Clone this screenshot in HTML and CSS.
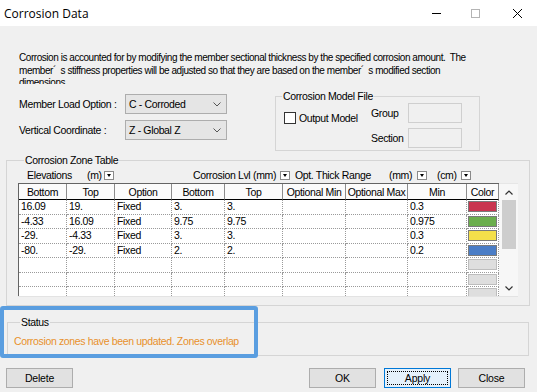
FILE: index.html
```html
<!DOCTYPE html>
<html lang="en">
<head>
    <meta charset="UTF-8">
    <title>Corrosion Data</title>
    <link rel="stylesheet" href="styles.css">
</head>
<body>
    <div class="window">
        <div class="titlebar">
            <span class="title">Corrosion Data</span>
            <div class="controls">
                <svg class="ctl-min" width="9" height="9" viewBox="0 0 9 9"><path d="M0 4.5h9" stroke="#000" stroke-width="1"/></svg>
                <svg class="ctl-max" width="9" height="9" viewBox="0 0 9 9"><rect x="0.5" y="0.5" width="8" height="8" fill="none" stroke="#b4b4b4"/></svg>
                <svg class="ctl-close" width="9" height="9" viewBox="0 0 9 9"><path d="M0 0L9 9M9 0L0 9" stroke="#000" stroke-width="1"/></svg>
            </div>
        </div>

        <div class="content">
            <p class="desc">
                Corrosion is accounted for by modifying the member sectional thickness by the specified corrosion amount.&nbsp; The<br>
                member´&nbsp; s stiffness properties will be adjusted so that they are based on the member´&nbsp; s modified section<br>
                dimensions.
            </p>

            <div class="top">
                <div class="options">
                    <div class="field">
                        <label>Member Load Option :</label>
                        <div class="combo"><span>C - Corroded</span><svg width="8" height="5" viewBox="0 0 8 5"><path d="M0.5 0.5L4 4L7.5 0.5" fill="none" stroke="#555"/></svg></div>
                    </div>
                    <div class="field">
                        <label>Vertical Coordinate :</label>
                        <div class="combo"><span>Z - Global Z</span><svg width="8" height="5" viewBox="0 0 8 5"><path d="M0.5 0.5L4 4L7.5 0.5" fill="none" stroke="#555"/></svg></div>
                    </div>
                </div>

                <fieldset class="group model">
                    <legend>Corrosion Model File</legend>
                    <div class="model-body">
                        <div class="output">
                            <span class="checkbox"></span>
                            <span>Output Model</span>
                        </div>
                        <div class="model-fields">
                            <span>Group</span>
                            <span class="textbox"></span>
                            <span>Section</span>
                            <span class="textbox"></span>
                        </div>
                    </div>
                </fieldset>
            </div>

            <fieldset class="group zone">
                <legend>Corrosion Zone Table</legend>
                <div class="units">
                    <span class="u-elev">Elevations</span>
                    <span class="u-m">(m)</span>
                    <span class="drop gap-79"></span>
                    <span class="u-lvl">Corrosion Lvl</span>
                    <span class="u-mm">(mm)</span>
                    <span class="drop gap-5"></span>
                    <span class="u-range">Opt. Thick Range</span>
                    <span class="u-mm2">(mm)</span>
                    <span class="drop gap-10"></span>
                    <span class="u-cm">(cm)</span>
                    <span class="drop"></span>
                </div>

                <div class="grid-wrap">
                    <table class="grid">
                        <thead>
                            <tr>
                                <th class="c1">Bottom</th>
                                <th class="c2">Top</th>
                                <th class="c3">Option</th>
                                <th class="c4">Bottom</th>
                                <th class="c5">Top</th>
                                <th class="c6">Optional Min</th>
                                <th class="c7">Optional Max</th>
                                <th class="c8">Min</th>
                                <th class="c9">Color</th>
                            </tr>
                        </thead>
                        <tbody>
                            <tr><td>16.09</td><td>19.</td><td>Fixed</td><td>3.</td><td>3.</td><td></td><td></td><td>0.3</td><td><div class="swatch red"></div></td></tr>
                            <tr><td>-4.33</td><td>16.09</td><td>Fixed</td><td>9.75</td><td>9.75</td><td></td><td></td><td>0.975</td><td><div class="swatch green"></div></td></tr>
                            <tr><td>-29.</td><td>-4.33</td><td>Fixed</td><td>3.</td><td>3.</td><td></td><td></td><td>0.3</td><td><div class="swatch yellow"></div></td></tr>
                            <tr><td>-80.</td><td>-29.</td><td>Fixed</td><td>2.</td><td>2.</td><td></td><td></td><td>0.2</td><td><div class="swatch blue"></div></td></tr>
                            <tr><td></td><td></td><td></td><td></td><td></td><td></td><td></td><td></td><td><div class="swatch empty"></div></td></tr>
                            <tr><td></td><td></td><td></td><td></td><td></td><td></td><td></td><td></td><td><div class="swatch empty"></div></td></tr>
                            <tr><td></td><td></td><td></td><td></td><td></td><td></td><td></td><td></td><td><div class="swatch empty"></div></td></tr>
                        </tbody>
                    </table>
                    <div class="vscroll">
                        <div class="arrow"><svg width="8" height="5" viewBox="0 0 8 5"><path d="M0.5 4.5L4 1L7.5 4.5" fill="none" stroke="#333" stroke-width="1.2"/></svg></div>
                        <div class="thumb"></div>
                        <div class="track"></div>
                        <div class="arrow"><svg width="8" height="5" viewBox="0 0 8 5"><path d="M0.5 0.5L4 4L7.5 0.5" fill="none" stroke="#333" stroke-width="1.2"/></svg></div>
                    </div>
                </div>
            </fieldset>

            <fieldset class="group status">
                <legend>Status</legend>
                <div class="status-text">Corrosion zones have been updated. Zones overlap</div>
            </fieldset>

            <div class="buttons">
                <button class="btn">Delete</button>
                <button class="btn push">OK</button>
                <button class="btn default">Apply</button>
                <button class="btn">Close</button>
            </div>
        </div>

        <div class="highlight"></div>
    </div>
</body>
</html>
```

FILE: styles.css
```css
* {
    box-sizing: border-box;
}

body {
    margin: 0;
    font-family: "Liberation Sans", Arial, sans-serif;
    font-size: 10.5px;
    letter-spacing: -0.35px;
    color: #000;
    background-color: #f0f0f0;
}

.window {
    position: relative;
    width: 537px;
    height: 392px;
    background-color: #f0f0f0;
    overflow: hidden;
}

/* title bar */
.titlebar {
    height: 26px;
    background-color: #fff;
    display: flex;
    align-items: center;
    justify-content: space-between;
}

.title {
    font-family: "Open Sans", "Noto Sans", sans-serif;
    font-size: 12px;
    letter-spacing: 0;
    padding-left: 4px;
}

.controls {
    display: flex;
    align-items: center;
    padding-right: 15px;
}

.ctl-max {
    margin-left: 30px;
}

.ctl-close {
    margin-left: 33px;
}

/* description */
.desc {
    margin: 26px 0 0;
    padding: 0 19px;
    height: 32px;
    font-size: 10px;
    letter-spacing: -0.45px;
    line-height: 12.5px;
    white-space: nowrap;
    overflow: hidden;
}

.top {
    display: flex;
    margin-top: 4px;
}

.options {
    padding: 6px 0 0 19px;
    display: flex;
    flex-direction: column;
    gap: 6px;
}

.field {
    display: flex;
    align-items: center;
    white-space: nowrap;
}

.field label {
    width: 106px;
}

.combo {
    width: 102px;
    height: 20px;
    border: 1px solid #adadad;
    background-color: #e5e5e5;
    display: flex;
    align-items: center;
    justify-content: space-between;
    padding: 0 5px 0 3px;
}

/* group boxes */
.group {
    margin: 0;
    padding: 0;
    border: 1px solid #d5d5d5;
    min-width: 0;
}

.group legend {
    margin-left: 6px;
    padding: 0 1px;
    line-height: 13px;
}

.model {
    margin-left: 48px;
    width: 205px;
    height: 61px;
    margin-top: 2px;
}

.model-body {
    display: flex;
}

.output {
    width: 87px;
    margin: 9px 0 0 8px;
    display: flex;
    align-items: center;
    gap: 3px;
    height: 12px;
    white-space: nowrap;
}

.checkbox {
    width: 12px;
    height: 12px;
    flex: none;
    border: 1px solid #333;
    background-color: #fff;
}

.model-fields {
    display: grid;
    grid-template-columns: 37px 54px;
    grid-auto-rows: 20px;
    row-gap: 5px;
    align-items: center;
}

.textbox {
    height: 20px;
    border: 1px solid #cfcfcf;
    background-color: #f0f0f0;
}

/* zone table */
.zone {
    margin: 3px 0 0 6px;
    width: 524px;
    padding: 0 11px 8px 11px;
}

.units {
    height: 16px;
    display: flex;
    align-items: center;
    padding-left: 9px;
    white-space: nowrap;
}

.u-elev { width: 60px; }
.u-m { width: 17px; }
.u-lvl { width: 60px; }
.u-mm { width: 27px; }
.u-range { width: 94px; }
.u-mm2 { width: 28px; }
.u-cm { width: 24px; }

.drop {
    width: 10px;
    height: 9px;
    border: 1px solid #8a8a8a;
    background-color: #fff;
    position: relative;
}

.drop::after {
    content: "";
    position: absolute;
    left: 2px;
    top: 2px;
    border-left: 2.5px solid transparent;
    border-right: 2.5px solid transparent;
    border-top: 3px solid #000;
}

.gap-79 { margin-right: 79px; }
.gap-5 { margin-right: 5px; }
.gap-10 { margin-right: 10px; }

.grid-wrap {
    display: flex;
    height: 114px;
    overflow: hidden;
    border-bottom: 1px solid #e3e3e3;
}

.grid {
    width: 481px;
    table-layout: fixed;
    border-collapse: separate;
    border-spacing: 0;
    background-color: #fff;
    border-left: 1px solid #646464;
    border-top: 1px solid #646464;
    align-self: flex-start;
}

.grid th {
    height: 16px;
    padding: 0;
    font-weight: normal;
    background-color: #fbfbfb;
    border-right: 1px solid #8c8c8c;
    border-bottom: 1px solid #000;
    text-align: center;
    white-space: nowrap;
    overflow: hidden;
}

.grid th.c1 { width: 48px; }
.grid th.c2 { width: 48px; }
.grid th.c3 { width: 57px; }
.grid th.c4 { width: 53px; }
.grid th.c5 { width: 58px; }
.grid th.c6 { width: 63px; }
.grid th.c7 { width: 62px; }
.grid th.c8 { width: 59px; }
.grid th.c9 { width: 32px; }

.grid td {
    height: 14.5px;
    padding: 0 0 0 2px;
    border-right: 1px dotted #9a9a9a;
    border-bottom: 1px dotted #9a9a9a;
    line-height: 13px;
    white-space: nowrap;
    overflow: hidden;
}

.grid td:last-child {
    padding: 0;
}

.swatch {
    height: 11px;
    margin: 0 1px;
    border: 1px solid #7a7a7a;
}

.red { background-color: #c9354f; }
.green { background-color: #6aae4c; }
.yellow { background-color: #f4e04a; }
.blue { background-color: #4a7dc6; }

.empty {
    background-color: #dedede;
    border-color: #bdbdbd;
}

.vscroll {
    width: 20px;
    background-color: #f7f7f7;
    border-top: 1px solid #e6e6e6;
    display: flex;
    flex-direction: column;
    align-items: center;
}

.arrow {
    height: 16px;
    width: 100%;
    display: flex;
    align-items: center;
    justify-content: center;
}

.thumb {
    width: 14px;
    height: 49px;
    background-color: #cdcdcd;
}

.track {
    flex: 1;
}

/* status */
.status {
    margin: 10px 0 0 7px;
    width: 522px;
    height: 40px;
    padding: 6px 6px 0;
}

.status-text {
    color: #e8912c;
    line-height: 13px;
}

/* buttons */
.buttons {
    display: flex;
    margin-top: 12px;
    padding-left: 6px;
}

.btn {
    width: 67px;
    height: 20px;
    font-family: inherit;
    font-size: 10.5px;
    letter-spacing: -0.2px;
    color: #000;
    background-color: #e1e1e1;
    border: 1px solid #adadad;
    padding: 0;
}

.btn.push {
    margin-left: 236px;
}

.btn.default {
    margin-left: 8px;
    margin-right: 7px;
    background-color: #e5f1fb;
    border-color: #0078d7;
    outline: 1px dotted #000;
    outline-offset: -4px;
}

/* annotation over the status box */
.highlight {
    position: absolute;
    left: 0;
    top: 306px;
    width: 258px;
    height: 52px;
    border: 4px solid #5a9ee0;
    border-radius: 3px;
}
```
